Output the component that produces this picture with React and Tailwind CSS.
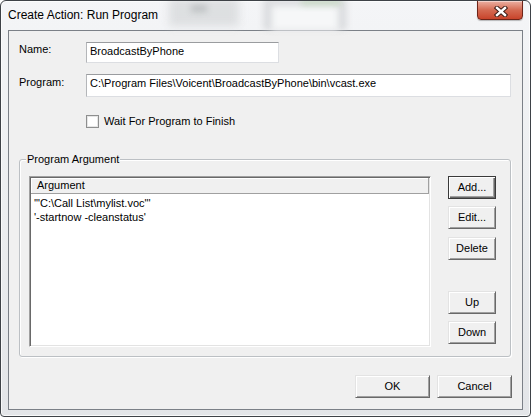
export default function App() {
  const btn =
    "flex items-center justify-center h-[23px] bg-[#f0f0f0] border border-t-[#e3e3e3] border-l-[#e3e3e3] border-b-[#696969] border-r-[#696969] shadow-[inset_1px_1px_0_#ffffff,inset_-1px_-1px_0_#a0a0a0] text-[11px] leading-[13px] text-black";
  const btnDefault =
    "flex items-center justify-center h-[23px] bg-[#f0f0f0] border border-[#3a3a3a] shadow-[inset_1px_1px_0_#ffffff,inset_-1px_-1px_0_#696969,inset_-2px_-2px_0_#a0a0a0] text-[11px] leading-[13px] text-black";
  const field =
    "bg-white border border-t-[#9a9c9f] border-l-[#b4b6b9] border-r-[#dcdee2] border-b-[#dcdee2] pl-[3px] pt-[2px] whitespace-nowrap overflow-hidden";

  return (
    <div className="w-[531px] h-[417px] bg-white">
      <div className="relative flex flex-col w-[531px] h-[417px] overflow-hidden rounded-t-[6px] rounded-b-[4px] border border-[#3e4247] bg-gradient-to-b from-[#f4f5f7] via-[#eceef0] to-[#e3e5e8] shadow-[inset_0_0_0_1px_rgba(255,255,255,0.75)] font-['Liberation_Sans',Arial,sans-serif] text-black">
        {/* Title bar */}
        <div className="relative h-[29px] shrink-0">
          <div className="absolute left-[168px] top-[-3px] w-[70px] h-[28px] bg-[#d6d8da] blur-[4px] opacity-75" />
          <div className="absolute left-[190px] top-[4px] w-[16px] h-[7px] bg-[#a9acaf] blur-[3px] opacity-60" />
          <div className="absolute left-[262px] top-[-3px] w-[84px] h-[32px] bg-[#cfd1d4] blur-[3px] opacity-65" />
          <div className="absolute left-[271px] top-[5px] w-[66px] h-[24px] bg-[#f6f7f8] blur-[3px]" />
          <div className="absolute left-[300px] top-[-2px] w-[40px] h-[6px] bg-[#c2d9bd] blur-[3px] opacity-80" />
          <div className="relative pl-[7px] pt-[6px] text-[12px] leading-[16px] text-black">
            Create Action: Run Program
          </div>
          <div className="absolute right-[7px] top-[-1px] w-[46px] h-[20px] rounded-b-[4px] border border-[#6e2418] bg-gradient-to-b from-[#eab0a3] via-[#d46a52] to-[#c8432a] shadow-[inset_0_1px_0_rgba(255,255,255,0.45),0_1px_1px_rgba(0,0,0,0.25)] flex items-center justify-center">
            <svg width="14" height="11" viewBox="0 0 14 11" className="mt-[2px] ml-[2px]">
              <path d="M3 2 L11 9 M11 2 L3 9" stroke="#3b1c16" strokeWidth="4.4" strokeLinecap="square" fill="none" />
              <path d="M3 2 L11 9 M11 2 L3 9" stroke="#ffffff" strokeWidth="2.4" strokeLinecap="square" fill="none" />
            </svg>
          </div>
        </div>

        {/* Client area */}
        <div className="mx-[7px] h-[380px] shrink-0 border border-[#7b8087] bg-[#f0f0f0] pl-[10px] flex flex-col text-[11px] leading-[13px]">
          {/* Name */}
          <div className="mt-[11px] flex items-start h-[21px]">
            <div className="w-[67px] mt-[1px]">Name:</div>
            <div className={"w-[193px] h-[21px] " + field}>BroadcastByPhone</div>
          </div>
          {/* Program */}
          <div className="mt-[11px] flex items-start h-[23px]">
            <div className="w-[67px] mt-[2px]">Program:</div>
            <div className={"w-[425px] h-[23px] " + field}>
              {"C:\\Program Files\\Voicent\\BroadcastByPhone\\bin\\vcast.exe"}
            </div>
          </div>
          {/* Checkbox */}
          <div className="mt-[18px] flex items-center h-[13px]">
            <div className="ml-[67px] w-[13px] h-[13px] border border-[#8e8f8f] bg-white shadow-[inset_0_0_0_1px_#e6e6e6]" />
            <div className="ml-[5px]">Wait For Program to Finish</div>
          </div>

          {/* Group box */}
          <div className="relative mt-[31px] w-[492px] h-[198px] rounded-[3px] border border-[#bcc0c4] shadow-[inset_1px_1px_0_#ffffff,1px_1px_0_#ffffff] flex items-start pl-[9px] pt-[16px]">
            <div className="absolute left-[6px] top-[-7px] px-[1px] bg-[#f0f0f0] leading-[13px]">
              Program Argument
            </div>
            {/* List */}
            <div className="w-[402px] h-[171px] bg-white border border-t-[#a0a0a0] border-l-[#a0a0a0] border-r-[#ffffff] border-b-[#ffffff] shadow-[inset_1px_1px_0_#696969,inset_-1px_-1px_0_#e3e3e3] p-[1px] flex flex-col">
              <div className="h-[16px] shrink-0 bg-[#f0f0f0] border-b border-r border-[#a0a0a0] shadow-[inset_1px_1px_0_#ffffff] pl-[6px] pt-[1px] leading-[13px]">
                Argument
              </div>
              <div className="mt-[2px] pl-[3px] leading-[14px]">
                <div>{"'\"C:\\Call List\\mylist.voc\"'"}</div>
                <div>{"'-startnow -cleanstatus'"}</div>
              </div>
            </div>
            {/* Side buttons */}
            <div className="ml-[17px] w-[48px] flex flex-col">
              <div className={btnDefault}>Add...</div>
              <div className={"mt-[7px] " + btn}>Edit...</div>
              <div className={"mt-[8px] " + btn}>Delete</div>
              <div className={"mt-[31px] " + btn}>Up</div>
              <div className={"mt-[7px] " + btn}>Down</div>
            </div>
          </div>

          {/* OK / Cancel */}
          <div className="mt-[18px] flex justify-end gap-[7px] pr-[10px]">
            <div className={"w-[75px] " + btn}>OK</div>
            <div className={"w-[75px] " + btn}>Cancel</div>
          </div>
        </div>
      </div>
    </div>
  );
}
